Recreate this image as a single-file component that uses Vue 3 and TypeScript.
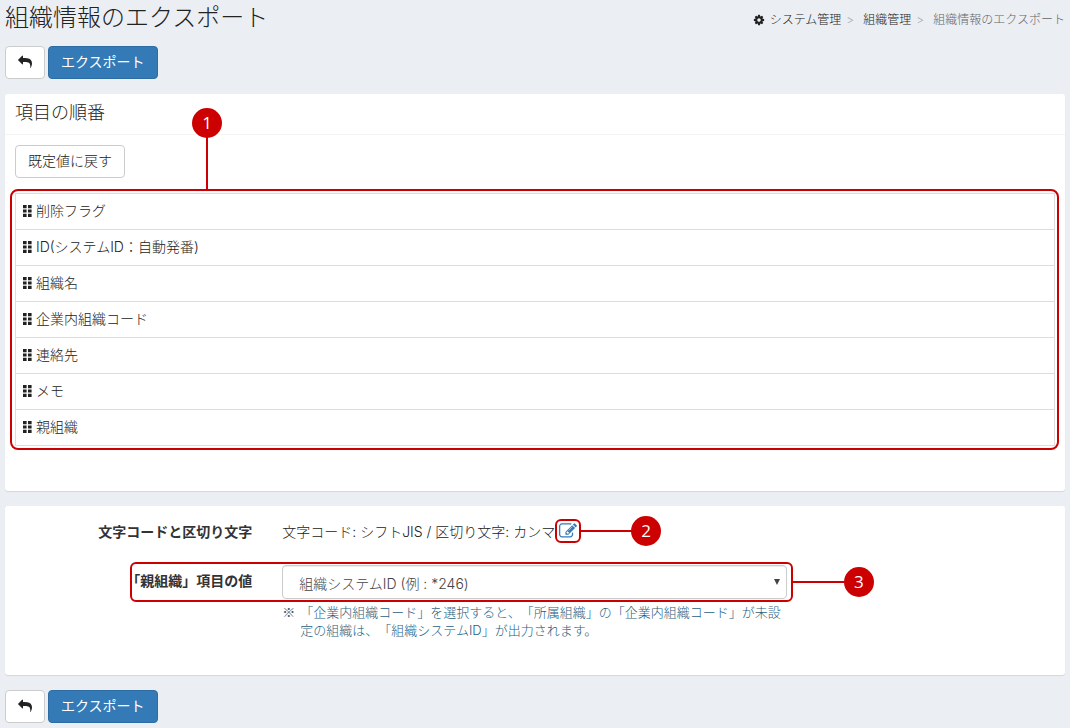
<script setup lang="ts">
import { ref } from 'vue'

const columns = ref<string[]>([
  '削除フラグ',
  'ID(システムID：自動発番)',
  '組織名',
  '企業内組織コード',
  '連絡先',
  'メモ',
  '親組織',
])

const parentValue = ref('system')

const backPath =
  'M1792 1120q0 166-127 451-3 7-10.5 24t-13.5 30-13 22q-12 17-28 17-15 0-23.5-10t-8.5-25q0-9 2.5-26.5t2.5-23.5q5-68 5-123 0-101-17.5-181t-48.5-138.5-80-101-105.5-69.5-133-42.5-154-21.5-175.5-6h-224v256q0 26-19 45t-45 19-45-19l-512-512q-19-19-19-45t19-45l512-512q19-19 45-19t45 19 19 45v256h224q713 0 875 403 53 134 53 333z'
</script>

<template>
  <main class="page">
    <header class="page-head">
      <h1>組織情報のエクスポート</h1>
      <nav class="crumbs" aria-label="breadcrumb">
        <a href="#">
          <svg class="gear" viewBox="0 0 1792 1792" aria-hidden="true">
            <path
              d="M1152 896q0-106-75-181t-181-75-181 75-75 181 75 181 181 75 181-75 75-181zm512-109v222q0 12-8 23t-20 13l-185 28q-19 54-39 91 35 50 107 138 10 12 10 25t-9 23q-27 37-99 108t-94 71q-12 0-26-9l-138-108q-44 23-91 38-16 136-29 186-7 28-36 28h-222q-14 0-24.5-8.5t-11.5-21.5l-28-184q-49-16-90-37l-141 107q-10 9-25 9-14 0-25-11-126-114-165-168-7-10-7-23 0-12 8-23 15-21 51-66.5t54-70.5q-27-50-41-99l-183-27q-13-2-21-12.5t-8-23.5v-222q0-12 8-23t19-13l186-28q14-46 39-92-40-57-107-138-10-12-10-24 0-10 9-23 26-36 98.5-107.5t94.5-71.5q13 0 26 10l138 107q44-23 91-38 16-136 29-186 7-28 36-28h222q14 0 24.5 8.5t11.5 21.5l28 184q49 16 90 37l142-107q9-9 24-9 13 0 25 10 129 119 165 170 7 8 7 22 0 12-8 23-15 21-51 66.5t-54 70.5q26 50 41 98l183 28q13 2 21 12.5t8 23.5z"
            />
          </svg>
          <span>システム管理</span>
        </a>
        <span class="sep">&gt;</span>
        <a href="#">組織管理</a>
        <span class="sep">&gt;</span>
        <span class="current">組織情報のエクスポート</span>
      </nav>
    </header>

    <div class="toolbar">
      <button type="button" class="btn back" aria-label="戻る">
        <svg viewBox="0 0 1792 1792" aria-hidden="true"><path :d="backPath" /></svg>
      </button>
      <button type="button" class="btn primary">エクスポート</button>
    </div>

    <section class="panel">
      <h2>項目の順番</h2>
      <div class="panel-body">
        <button type="button" class="btn">既定値に戻す</button>
        <div class="order marked">
          <ul>
            <li v-for="name in columns" :key="name">
              <svg class="grip" viewBox="0 0 9 12" aria-hidden="true">
                <path d="M0 0h3.6v3.2H0zM5 0h3.6v3.2H5zM0 4.4h3.6v3.2H0zM5 4.4h3.6v3.2H5zM0 8.8h3.6V12H0zM5 8.8h3.6V12H5z" />
              </svg>
              <span>{{ name }}</span>
            </li>
          </ul>
          <span class="frame" />
          <span class="stem up" />
          <span class="badge one">1</span>
        </div>
      </div>
    </section>

    <section class="panel form">
      <div class="row">
        <div class="label">文字コードと区切り文字</div>
        <div class="field code">
          <span>文字コード: シフトJIS / 区切り文字: カンマ</span>
          <span class="edit marked">
            <a href="#" aria-label="編集">
              <svg viewBox="0 0 1792 1792" aria-hidden="true">
                <path
                  d="M888 1184l116-116-152-152-116 116v56h96v96h56zm440-720q-16-16-33 1l-350 350q-17 17-1 33t33-1l350-350q17-17 1-33zm80 594v190q0 119-84.5 203.5t-203.5 84.5h-832q-119 0-203.5-84.5t-84.5-203.5v-832q0-119 84.5-203.5t203.5-84.5h832q63 0 117 25 15 7 18 23 3 17-9 29l-49 49q-14 14-32 8-23-6-45-6h-832q-66 0-113 47t-47 113v832q0 66 47 113t113 47h832q66 0 113-47t47-113v-126q0-13 9-22l64-64q15-15 35-7t20 29zm-96-738l288 288-672 672h-288v-288zm444 132l-92 92-288-288 92-92q28-28 68-28t68 28l152 152q28 28 28 68t-28 68z"
                />
              </svg>
            </a>
            <span class="frame" />
            <span class="stem side" />
            <span class="badge aside">2</span>
          </span>
        </div>
      </div>

      <div class="row">
        <label class="label" for="parent-value">「親組織」項目の値</label>
        <div class="field">
          <div class="choice marked">
            <select id="parent-value" v-model="parentValue">
              <option value="system">組織システムID (例 : *246)</option>
              <option value="code">企業内組織コード</option>
            </select>
            <span class="arrow" aria-hidden="true" />
            <span class="frame" />
            <span class="stem side" />
            <span class="badge aside">3</span>
          </div>
          <p class="note">
            <span class="mark">※</span>
            <span>「企業内組織コード」を選択すると、「所属組織」の「企業内組織コード」が未設定の組織は、「組織システムID」が出力されます。</span>
          </p>
        </div>
      </div>
    </section>

    <div class="toolbar">
      <button type="button" class="btn back" aria-label="戻る">
        <svg viewBox="0 0 1792 1792" aria-hidden="true"><path :d="backPath" /></svg>
      </button>
      <button type="button" class="btn primary">エクスポート</button>
    </div>
  </main>
</template>

<style>
body {
  margin: 0;
  background: #ebeff4;
}
</style>

<style scoped>
* {
  box-sizing: border-box;
}
.page {
  padding: 1px 5px 5px;
  font: 300 14px/20px Inter, 'Noto Sans CJK JP', sans-serif;
  color: #222;
  text-spacing-trim: space-all;
}
svg {
  display: block;
  fill: currentColor;
}
.page-head {
  display: flex;
  justify-content: space-between;
  height: 33px;
}
h1,
h2 {
  margin: 0;
  font-weight: 300;
}
h1 {
  font-size: 24px;
  line-height: 34px;
}
.crumbs {
  display: flex;
  align-items: center;
  padding-top: 5px;
  font-size: 12px;
  color: #666;
}
.crumbs a {
  display: flex;
  align-items: center;
  gap: 5px;
  color: #222;
  text-decoration: none;
}
.gear {
  width: 12px;
  height: 12px;
}
.sep {
  width: 22px;
  padding-left: 5px;
  color: #aaa;
}
.toolbar {
  display: flex;
  gap: 3px;
  margin: 12px 0 15px;
}
.btn {
  height: 33px;
  padding: 0 12px 2px;
  border: 1px solid #ccc;
  border-radius: 4px;
  background: #fff;
  color: #222;
  font: inherit;
}
.back {
  width: 40px;
}
.back svg {
  width: 14px;
  height: 14px;
}
.primary {
  border-color: #2e6da4;
  background: #337ab7;
  color: #fff;
  font-weight: 400;
}
.panel {
  margin-bottom: 15px;
  border-radius: 3px;
  background: #fff;
  box-shadow: 0 1px 1px rgba(0, 0, 0, 0.1);
}
h2 {
  padding: 7px 10px 9px;
  border-bottom: 1px solid #f4f4f4;
  font-size: 18px;
  line-height: 24px;
}
.panel-body {
  padding: 10px 10px 45px;
}
.marked {
  position: relative;
}
.order {
  margin-top: 15px;
}
ul {
  margin: 0;
  padding: 0;
  list-style: none;
  border: 1px solid #ddd;
  border-bottom: 0;
}
li {
  display: flex;
  align-items: center;
  gap: 4px;
  height: 36px;
  padding: 0 7px 2px;
  border-bottom: 1px solid #ddd;
}
.grip {
  width: 9px;
  height: 12px;
}
.form {
  padding: 16px 10px 36px;
}
.row {
  display: grid;
  grid-template-columns: 1fr 2fr 1fr;
  margin: 0 -14px 0 -15px;
}
.row + .row {
  margin-top: 23px;
}
.row + .row .label {
  padding-top: 6px;
}
.label {
  padding: 0 15px;
  text-align: right;
  font-weight: 700;
  color: #333;
}
.field {
  padding: 0 15px;
}
.code {
  display: flex;
  align-items: flex-start;
}
.edit {
  margin-left: 4px;
}
.edit a {
  display: block;
  color: #337ab7;
}
.edit svg {
  width: 18px;
  height: 18px;
}
select {
  display: block;
  width: 100%;
  height: 34px;
  padding: 3px 24px 0 16px;
  border: 1px solid #ccc;
  border-radius: 4px;
  background: #fff;
  box-shadow: inset 0 1px 1px rgba(0, 0, 0, 0.075);
  appearance: none;
  font: inherit;
  color: #444;
}
.arrow {
  position: absolute;
  top: 14px;
  right: 7px;
  border: 3px solid transparent;
  border-top: 6px solid #444;
  border-bottom: 0;
  pointer-events: none;
}
.note {
  display: flex;
  gap: 5px;
  margin: 4px 0 0;
  font-size: 13px;
  line-height: 18px;
  color: #1f5f80;
}
.mark {
  font-family: 'Noto Sans CJK JP', sans-serif;
}
.frame,
.stem,
.badge {
  position: absolute;
  pointer-events: none;
}
.frame {
  border: 2px solid #c00;
  border-radius: 6px;
}
.order .frame {
  inset: -4px -4px -4px -5px;
  border-radius: 8px;
}
.edit .frame {
  inset: -3px -4px;
}
.choice .frame {
  inset: -3px -6px -3px -152px;
}
.stem {
  background: #c00;
}
.up {
  left: 191px;
  bottom: calc(100% + 2px);
  width: 2px;
  height: 54px;
}
.side {
  left: calc(100% + 4px);
  top: 50%;
  width: 54px;
  height: 2px;
  margin-top: -1px;
}
.badge {
  width: 30px;
  height: 30px;
  border-radius: 50%;
  background: #c00;
  color: #fff;
  font: 400 17px/30px 'Open Sans', sans-serif;
  text-align: center;
}
.one {
  left: 177px;
  top: -85px;
}
.aside {
  left: calc(100% + 54px);
  top: 50%;
  margin-top: -15px;
}
.choice .aside {
  left: calc(100% + 57px);
}
</style>
